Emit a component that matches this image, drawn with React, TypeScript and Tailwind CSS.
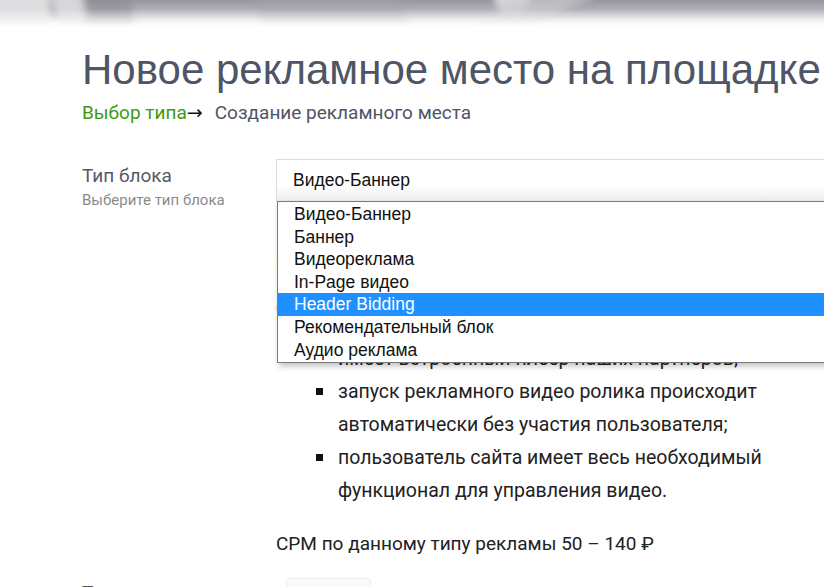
const options = [
  'Видео-Баннер',
  'Баннер',
  'Видеореклама',
  'In-Page видео',
  'Header Bidding',
  'Рекомендательный блок',
  'Аудио реклама',
]

const bullets = [
  ['имеет встроенный плеер наших партнеров;'],
  ['запуск рекламного видео ролика происходит', 'автоматически без участия пользователя;'],
  ['пользователь сайта имеет весь необходимый', 'функционал для управления видео.'],
]

const HeaderBlur = () => (
  <svg className="block h-[30px] w-full" viewBox="0 0 824 30" preserveAspectRatio="none">
    <defs>
      <linearGradient id="hb" x1="0" y1="0" x2="0" y2="1">
        <stop offset="0" stopColor="#9796a0" />
        <stop offset="0.55" stopColor="#c4c3c9" />
        <stop offset="0.95" stopColor="#ffffff" />
      </linearGradient>
      <linearGradient id="fade" x1="0" y1="0" x2="0" y2="1">
        <stop offset="0.3" stopColor="#ffffff" stopOpacity="0" />
        <stop offset="0.92" stopColor="#ffffff" stopOpacity="1" />
      </linearGradient>
      <filter id="bl" x="-20%" y="-50%" width="140%" height="200%">
        <feGaussianBlur stdDeviation="3" />
      </filter>
    </defs>
    <rect width="824" height="30" fill="url(#hb)" />
    <g filter="url(#bl)">
      <rect x="-10" y="-5" width="60" height="40" fill="#dedee0" />
      <polygon points="50,-5 85,-5 90,30 62,30" fill="#d8d8db" />
      <polygon points="80,-5 130,-5 135,30 88,30" fill="#86848f" opacity="0.45" />
      <polygon points="255,-5 400,-5 410,30 262,30" fill="#a4a3ab" opacity="0.4" />
      <ellipse cx="512" cy="-2" rx="18" ry="17" fill="#d2d2d5" />
      <polygon points="530,-5 600,-5 520,28 470,30" fill="#cacacd" opacity="0.7" />
    </g>
    <rect width="824" height="30" fill="url(#fade)" />
  </svg>
)

export default function App() {
  return (
    <div className="relative h-[587px] w-full overflow-hidden bg-white">
      <HeaderBlur />
      <div className="pl-[82px]">
        <h1 className="mt-[17px] whitespace-nowrap font-['Liberation_Sans',Arial,sans-serif] text-[42px] leading-[46px] text-[#4e5567]">
          Новое рекламное место на площадке
        </h1>
        <div className="mt-[7px] whitespace-nowrap font-['Roboto',sans-serif] text-[19px] leading-[24px] text-[#4e5567]">
          <span className="text-[#3d9a10]">Выбор типа</span>
          <span className="inline-block w-[28px] font-['DejaVu_Sans',sans-serif] text-[19px] text-[#111]">→</span>
          Создание рекламного места
        </div>

        <div className="mt-[34px] flex">
          <div className="w-[194px] shrink-0 pt-[5px] font-['Roboto',sans-serif]">
            <div className="text-[19px] leading-[24px] text-[#555b66]">Тип блока</div>
            <div className="mt-[3px] text-[15px] leading-[18px] text-[#8a8a8a]">Выберите тип блока</div>
          </div>

          <div className="w-[600px] shrink-0 font-['Roboto',sans-serif] text-[19.5px] text-[#222]">
            <div className="relative">
              <div className="flex h-[43px] items-center border border-[#dcdcdc] bg-gradient-to-b from-white from-60% to-[#eeeeee] pl-[16px] font-['Liberation_Sans',Arial,sans-serif] text-[17.5px] text-[#111]">
                Видео-Баннер
              </div>
              <ul className="absolute left-[1px] top-[42px] z-10 w-[600px] border border-[#7a7a7a] bg-white py-[1px] font-['Liberation_Sans',Arial,sans-serif] text-[17.5px] leading-[22.6px] text-[#111] shadow-[2px_3px_6px_rgba(0,0,0,0.25)]">
                {options.map((o) => (
                  <li
                    key={o}
                    className={`pl-[16px] ${o === 'Header Bidding' ? 'bg-[#1e90ff] text-white' : ''}`}
                  >
                    {o}
                  </li>
                ))}
              </ul>
            </div>

            <p className="mt-[24px] leading-[23px] text-[#222]">
              Видео-баннер — это
              <br />
              рекламный блок, который
              <br />
              встраивается в контент
              <br />
              страницы и при этом:
            </p>

            <ul className="mt-[24px] leading-[33px]">
              {bullets.map((lines) => (
                <li key={lines[0]} className="flex">
                  <span className="ml-[40px] mr-[15px] mt-[13px] h-[7px] w-[7px] shrink-0 bg-[#111]" />
                  <span>
                    {lines.map((l, i) => (
                      <span key={i} className="block whitespace-nowrap">
                        {l}
                      </span>
                    ))}
                  </span>
                </li>
              ))}
            </ul>

            <p className="mt-[20px] whitespace-nowrap text-[19px] leading-[33px]">CPM по данному типу рекламы 50 – 140 ₽</p>

            <div className="mt-[18px] ml-[10px] h-[16px] w-[85px] rounded-[3px] border border-[#eee] bg-[#fafafa] blur-[0.5px]" />
          </div>
        </div>
      </div>
      <div className="absolute left-[82px] top-[583px] font-['Roboto',sans-serif] text-[19px] leading-[19px] text-[#4e5567]">
        Тематика
      </div>
    </div>
  )
}
